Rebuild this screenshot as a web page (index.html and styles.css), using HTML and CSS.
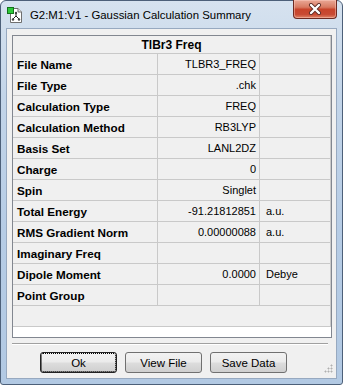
FILE: index.html
```html
<!DOCTYPE html>
<html lang="en">
<head>
  <meta charset="UTF-8">
  <title>Gaussian Calculation Summary</title>
  <link rel="stylesheet" href="styles.css">
</head>
<body>
<div class="window">
  <div class="titlebar">
    <svg class="app-icon" width="16" height="16" viewBox="0 0 16 16">
      <path d="M3.5 1.5 H11 L14.5 5 V15.5 H3.5 Z" fill="#fff" stroke="#6f6f6f"/>
      <path d="M11 1.5 V5 H14.5" fill="#e6e6e6" stroke="#6f6f6f"/>
      <path d="M9 6 V9 M9 9 L6 12 M9 9 L12 12" stroke="#222" stroke-width="1" fill="none"/>
      <circle cx="9" cy="6" r="1.2" fill="#444"/>
      <circle cx="6" cy="12.5" r="1.2" fill="#444"/>
      <circle cx="12" cy="12.5" r="1.2" fill="#444"/>
      <rect x="0.5" y="0.5" width="6" height="6" fill="#2fc83a" stroke="#13731b"/>
    </svg>
    <span class="title">G2:M1:V1 - Gaussian Calculation Summary</span>
    <div class="close-btn">
      <svg width="14" height="12" viewBox="0 0 14 12">
        <path d="M3 2 L11 10 M11 2 L3 10" stroke="#5a2a24" stroke-width="4" stroke-linecap="round" fill="none"/>
        <path d="M3 2 L11 10 M11 2 L3 10" stroke="#fff" stroke-width="2.4" stroke-linecap="round" fill="none"/>
      </svg>
    </div>
  </div>

  <div class="client">
    <div class="grid-box">
      <table class="summary">
        <colgroup>
          <col class="c-label">
          <col class="c-value">
          <col class="c-unit">
        </colgroup>
        <thead>
          <tr><th colspan="3">TlBr3 Freq</th></tr>
        </thead>
        <tbody>
          <tr><td class="lbl">File Name</td><td class="val">TLBR3_FREQ</td><td class="unit"></td></tr>
          <tr><td class="lbl">File Type</td><td class="val">.chk</td><td class="unit"></td></tr>
          <tr><td class="lbl">Calculation Type</td><td class="val">FREQ</td><td class="unit"></td></tr>
          <tr><td class="lbl">Calculation Method</td><td class="val">RB3LYP</td><td class="unit"></td></tr>
          <tr><td class="lbl">Basis Set</td><td class="val">LANL2DZ</td><td class="unit"></td></tr>
          <tr><td class="lbl">Charge</td><td class="val">0</td><td class="unit"></td></tr>
          <tr><td class="lbl">Spin</td><td class="val">Singlet</td><td class="unit"></td></tr>
          <tr><td class="lbl">Total Energy</td><td class="val">-91.21812851</td><td class="unit">a.u.</td></tr>
          <tr><td class="lbl">RMS Gradient Norm</td><td class="val">0.00000088</td><td class="unit">a.u.</td></tr>
          <tr><td class="lbl">Imaginary Freq</td><td class="val"></td><td class="unit"></td></tr>
          <tr><td class="lbl">Dipole Moment</td><td class="val">0.0000</td><td class="unit">Debye</td></tr>
          <tr><td class="lbl">Point Group</td><td class="val"></td><td class="unit"></td></tr>
          <tr><td class="empty" colspan="3"></td></tr>
        </tbody>
      </table>
    </div>

    <div class="separator"></div>

    <div class="buttons">
      <button class="btn btn-default">Ok</button>
      <button class="btn">View File</button>
      <button class="btn">Save Data</button>
    </div>

    <div class="grip"></div>
  </div>
</div>
</body>
</html>
```

FILE: styles.css
```css
html, body {
  margin: 0;
  padding: 0;
  background: #fff;
}
body {
  font-family: "Liberation Sans", Arial, sans-serif;
  width: 343px;
  height: 386px;
  overflow: hidden;
}
.window {
  box-sizing: border-box;
  width: 343px;
  height: 385px;
  border: 1px solid #4d6079;
  border-radius: 6px 6px 3px 3px;
  padding: 0 5px 5px 5px;
  background: linear-gradient(180deg, #d6e2ef 0%, #c3d5e9 25%, #b6cce5 60%, #b2c9e3 100%);
  display: flex;
  flex-direction: column;
}
.titlebar {
  height: 27px;
  display: flex;
  align-items: flex-start;
  flex: none;
}
.app-icon {
  margin: 6px 0 0 1px;
  flex: none;
}
.title {
  margin: 6px 0 0 7px;
  font-size: 11.4px;
  line-height: 16px;
  color: #000;
  white-space: nowrap;
}
.close-btn {
  margin-left: auto;
  margin-top: -1px;
  width: 44px;
  height: 19px;
  box-sizing: border-box;
  border: 1px solid #6d2a22;
  border-top: none;
  border-radius: 0 0 4px 4px;
  background: linear-gradient(180deg, #eaa896 0%, #d87a62 40%, #c8442b 52%, #c84a33 80%, #df8467 100%);
  box-shadow: inset 0 0 0 1px rgba(255, 210, 200, 0.45);
  display: flex;
  align-items: center;
  justify-content: center;
}
.client {
  position: relative;
  flex: 1;
  box-sizing: border-box;
  border: 1px solid #97a9c0;
  background: #f0f0f0;
  padding: 6px 4px 0 5px;
}
.grid-box {
  height: 303px;
  box-sizing: border-box;
  border: 1px solid #828790;
  background: #fff;
}
.summary {
  width: 318px;
  table-layout: fixed;
  border-collapse: separate;
  border-spacing: 0;
  font-size: 11px;
  color: #000;
}
.c-label { width: 145px; }
.c-value { width: 102px; }
.c-unit { width: 71px; }
.summary th,
.summary td {
  box-sizing: border-box;
  background: #f0f0f0;
  border-bottom: 1px solid #c9c9c9;
  padding: 0;
  white-space: nowrap;
  overflow: hidden;
}
.summary th {
  height: 18px;
  font-size: 12px;
  font-weight: bold;
  text-align: center;
  border-right: 1px solid #c9c9c9;
}
.summary td {
  height: 21px;
  border-right: 1px solid #c9c9c9;
}
.lbl {
  font-weight: bold;
  font-size: 11.7px;
  padding-left: 4px !important;
}
.val {
  text-align: right;
  padding-right: 3px !important;
}
.unit {
  padding-left: 6px !important;
}
.separator {
  margin: 5px 4px 0 0;
  border-top: 1px solid #a0a0a0;
  border-bottom: 1px solid #fff;
}
.buttons {
  display: flex;
  gap: 8px;
  margin-top: 7px;
  padding-left: 28px;
}
.btn {
  width: 77px;
  height: 21px;
  box-sizing: border-box;
  border: 1px solid #707070;
  border-radius: 3px;
  background: linear-gradient(180deg, #f2f2f2 0%, #ebebeb 48%, #dddddd 52%, #cfcfcf 100%);
  font-family: "Liberation Sans", Arial, sans-serif;
  font-size: 11.5px;
  color: #000;
  padding: 0;
}
.btn-default {
  border-color: #222;
  outline: 1px dotted #000;
  outline-offset: -2px;
}
.grip {
  position: absolute;
  right: 3px;
  bottom: 5px;
  width: 9px;
  height: 9px;
  background:
    radial-gradient(circle at 7.5px 1.5px, #b0b0b0 0.9px, transparent 1.1px),
    radial-gradient(circle at 4.5px 4.5px, #b0b0b0 0.9px, transparent 1.1px),
    radial-gradient(circle at 7.5px 4.5px, #b0b0b0 0.9px, transparent 1.1px),
    radial-gradient(circle at 1.5px 7.5px, #b0b0b0 0.9px, transparent 1.1px),
    radial-gradient(circle at 4.5px 7.5px, #b0b0b0 0.9px, transparent 1.1px),
    radial-gradient(circle at 7.5px 7.5px, #b0b0b0 0.9px, transparent 1.1px);
}
```
